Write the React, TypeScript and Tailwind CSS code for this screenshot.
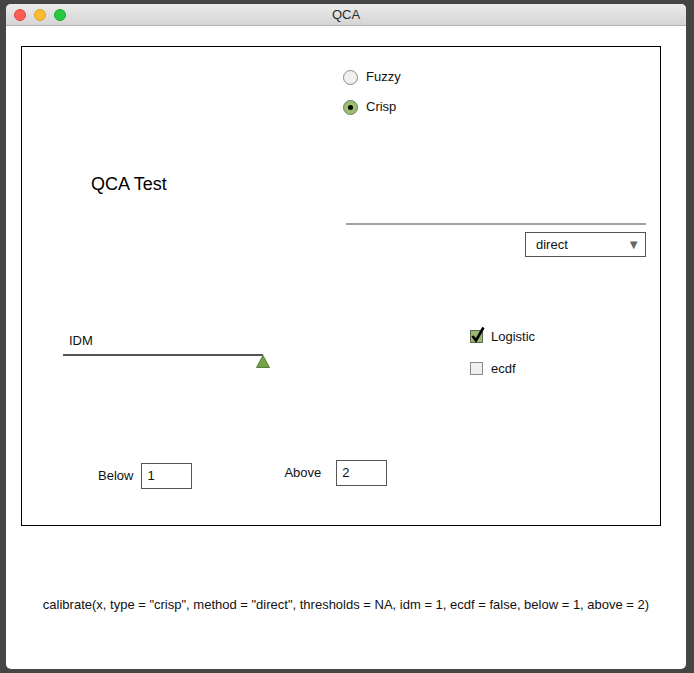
import { useState } from "react";

const font = { fontFamily: '"Liberation Sans", Arial, sans-serif' };

function Radio({ label, checked, onClick }: { label: string; checked: boolean; onClick: () => void }) {
  return (
    <div className="flex h-[30px] cursor-default items-center" onClick={onClick}>
      <span
        className={[
          "flex h-[15px] w-[15px] items-center justify-center rounded-full border",
          checked ? "border-[#6f7f60] bg-[#9cbd74]" : "border-[#8a8a8a] bg-[#f0f0f0]",
        ].join(" ")}
      >
        {checked && <span className="h-[5px] w-[5px] rounded-full bg-black" />}
      </span>
      <span className="ml-[8px] text-[13px] text-[#111]">{label}</span>
    </div>
  );
}

function Checkbox({ label, checked }: { label: string; checked: boolean }) {
  return (
    <div className="flex h-[13px] items-center">
      <span
        className={[
          "relative h-[13px] w-[13px] border",
          checked ? "border-[#5d6b50] bg-[#98b872]" : "border-[#8a8a8a] bg-[#efefef]",
        ].join(" ")}
      >
        {checked && (
          <svg className="absolute -top-[5px] left-0" width="14" height="17" viewBox="0 0 14 17">
            <path d="M1.5 10 L5 14.5 L12.5 1.5" fill="none" stroke="#000" strokeWidth="2.6" />
          </svg>
        )}
      </span>
      <span className="ml-[8px] text-[13px] text-[#111]">{label}</span>
    </div>
  );
}

export default function App() {
  const [type, setType] = useState<"fuzzy" | "crisp">("crisp");

  return (
    <div className="h-[673px] w-[694px] overflow-hidden bg-[#454545] pl-[6px] pt-[4px]" style={font}>
      <div className="flex h-[665px] w-[680px] flex-col overflow-hidden rounded-[5px] bg-white">
        <div className="relative flex h-[22px] shrink-0 items-center border-b border-[#b3b3b3] bg-gradient-to-b from-[#ebebeb] to-[#d5d5d5]">
          <div className="flex items-center gap-[8px] pl-[8px]">
            <span className="h-[12px] w-[12px] rounded-full border border-[#e0443e] bg-[#fd5f57]" />
            <span className="h-[12px] w-[12px] rounded-full border border-[#dea123] bg-[#febc2e]" />
            <span className="h-[12px] w-[12px] rounded-full border border-[#1aab29] bg-[#28c840]" />
          </div>
          <div className="absolute inset-0 flex items-center justify-center text-[13px] text-[#2a2a2a]">QCA</div>
        </div>

        <div className="ml-[15px] mt-[20px] h-[480px] w-[640px] border border-black">
          <div className="pl-[321px] pt-[15px]">
            <Radio label="Fuzzy" checked={type === "fuzzy"} onClick={() => setType("fuzzy")} />
            <Radio label="Crisp" checked={type === "crisp"} onClick={() => setType("crisp")} />
          </div>

          <div className="mt-[52px] pl-[69px] text-[18px] leading-[20px] text-black">QCA Test</div>

          <div className="ml-[324px] mt-[29px] h-[2px] w-[300px] bg-[#a3a3a3]" />

          <div className="ml-[503px] mt-[7px] flex h-[25px] w-[121px] items-center justify-between border border-[#555] bg-white pl-[10px] pr-[5px] text-[13px] text-[#111]">
            <span>direct</span>
            <span className="text-[13px] text-[#666]">▼</span>
          </div>

          <div className="mt-[73px] flex">
            <div className="w-[448px] pl-[41px]">
              <div className="ml-[6px] mt-[3px] text-[13px] leading-[16px] text-[#111]">IDM</div>
              <div className="relative mt-[5px] h-[2px] w-[200px] bg-[#555]">
                <svg className="absolute left-[193px] top-[1px]" width="14" height="13" viewBox="0 0 14 13">
                  <path d="M7 0.5 L13.5 12.5 L0.5 12.5 Z" fill="#73a347" stroke="#5b7f3a" />
                </svg>
              </div>
            </div>
            <div className="flex flex-col gap-[19px]">
              <Checkbox label="Logistic" checked />
              <Checkbox label="ecdf" checked={false} />
            </div>
          </div>

          <div className="mt-[85px] flex items-start text-[13px] text-[#111]">
            <div className="ml-[76px] mt-[3px] flex items-center">
              <span>Below</span>
              <div className="ml-[8px] flex h-[26px] w-[51px] items-center border border-[#555] pl-[5px]">1</div>
            </div>
            <div className="ml-[92px] flex items-center">
              <span>Above</span>
              <div className="ml-[15px] flex h-[26px] w-[51px] items-center border border-[#555] pl-[5px]">2</div>
            </div>
          </div>
        </div>

        <div className="mt-[69px] text-center text-[13px] text-[#111]">
          calibrate(x, type = "crisp", method = "direct", thresholds = NA, idm = 1, ecdf = false, below = 1, above = 2)
        </div>
      </div>
    </div>
  );
}
